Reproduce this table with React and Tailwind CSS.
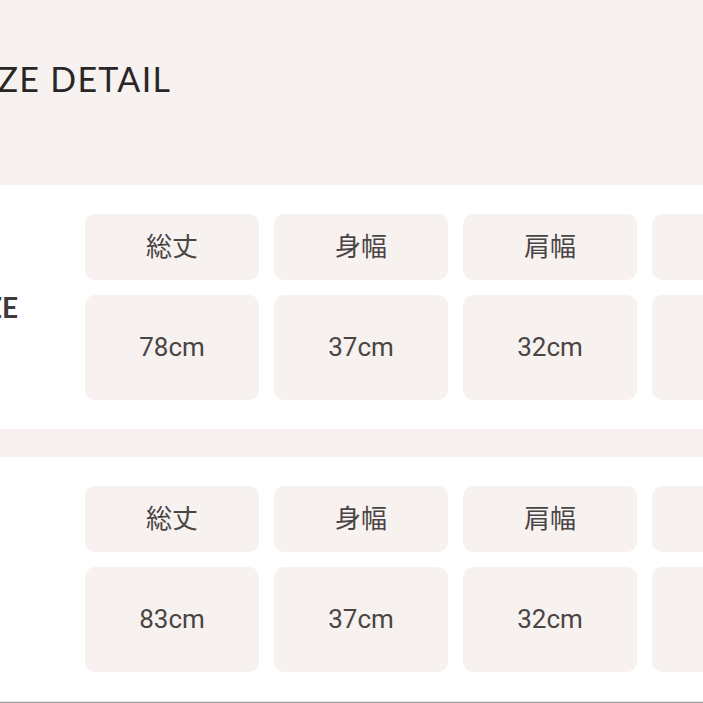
import React from 'react';

const heads = ['総丈', '身幅', '肩幅', '袖丈'];

const SizeBlock = ({ label, values }) => (
  <div className="flex h-[244px] bg-white">
    {/* size label column */}
    <div className="w-[125px] shrink-0 flex items-center justify-end pr-[67px]">
      <span className="text-[28px] font-bold text-[#3f3a3a] font-['Lato',sans-serif] leading-none">{label}</span>
    </div>
    <div className="pt-[29px] flex flex-col gap-[15px]">
      <div className="flex gap-[15px]">
        {heads.map((h) => (
          <div key={h} className="w-[174px] h-[66px] shrink-0 rounded-[10px] bg-[#f7f1f0] flex items-center justify-center text-[26px] text-[#4a4545]">
            {h}
          </div>
        ))}
      </div>
      <div className="flex gap-[15px]">
        {values.map((v, i) => (
          <div key={i} className="w-[174px] h-[105px] shrink-0 rounded-[10px] bg-[#f7f1f0] flex items-center justify-center text-[26px] text-[#4a4545]">
            {v}
          </div>
        ))}
      </div>
    </div>
  </div>
);

export default function App() {
  return (
    <div className="w-full h-[703px] overflow-hidden bg-white font-['Roboto','Noto_Sans_CJK_JP',sans-serif]">
      <div className="-ml-[40px] w-[1000px]">
        {/* header band */}
        <div className="h-[185px] bg-[#f7f1f0] pt-[62px]">
          <h1 className="text-[34px] leading-[34px] tracking-[1.3px] text-[#2b2626] font-['Lato',sans-serif] font-normal pl-[7px]">
            SIZE DETAIL
          </h1>
        </div>

        <SizeBlock label="SIZE" values={['78cm', '37cm', '32cm', '60cm']} />

        <div className="h-[28px] bg-[#f7f1f0]" />

        <SizeBlock label="" values={['83cm', '37cm', '32cm', '60cm']} />

        <div className="h-[1px] bg-[#e6e6e6]" />
        <div className="h-[3px] bg-[#9d9d9d]" />
      </div>
    </div>
  );
}
